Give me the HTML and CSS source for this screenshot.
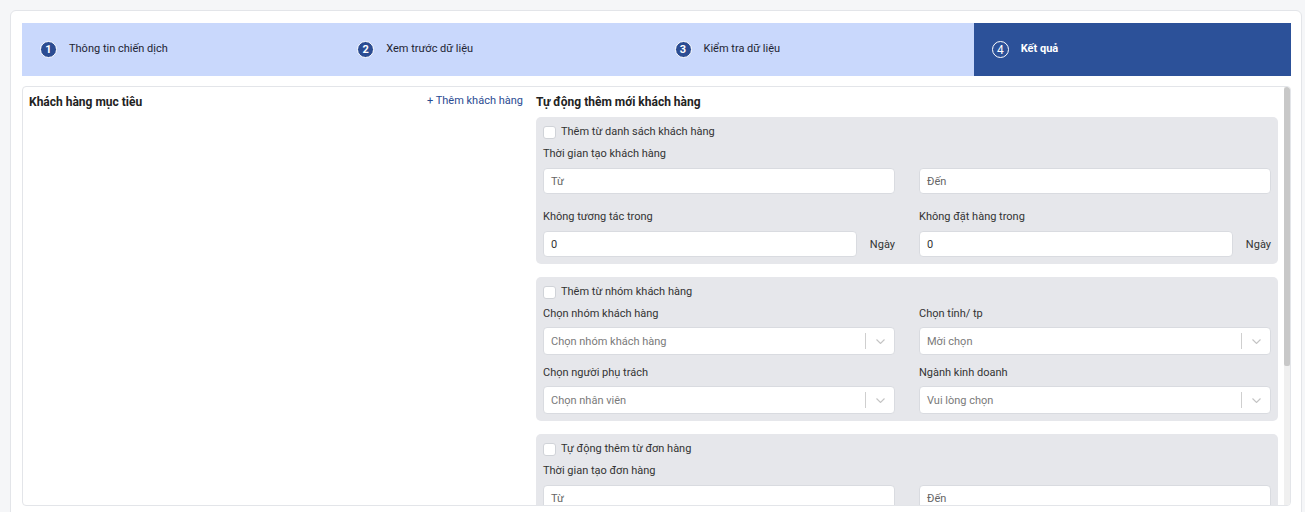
FILE: index.html
```html
<!DOCTYPE html>
<html lang="vi">
<head>
<meta charset="utf-8">
<title>Kết quả</title>
<link rel="stylesheet" href="styles.css">
</head>
<body>
<div class="page">
  <div class="card">
    <div class="stepper">
      <div class="step"><span class="num">1</span><span class="step-label">Thông tin chiến dịch</span></div>
      <div class="step"><span class="num">2</span><span class="step-label">Xem trước dữ liệu</span></div>
      <div class="step"><span class="num">3</span><span class="step-label">Kiểm tra dữ liệu</span></div>
      <div class="step active"><span class="num">4</span><span class="step-label">Kết quả</span></div>
    </div>
    <div class="panel">
      <div class="panel-body">
        <div class="col-left">
          <div class="head">
            <span class="title">Khách hàng mục tiêu</span>
            <span class="add">+ Thêm khách hàng</span>
          </div>
        </div>
        <div class="col-right">
          <div class="title title-right">Tự động thêm mới khách hàng</div>

          <div class="box box-a">
            <label class="check"><span class="cb"></span>Thêm từ danh sách khách hàng</label>
            <div class="grid">
              <div class="field">
                <div class="lbl">Thời gian tạo khách hàng</div>
                <div class="input placeholder">Từ</div>
              </div>
              <div class="field">
                <div class="lbl lbl-empty">&nbsp;</div>
                <div class="input placeholder">Đến</div>
              </div>
              <div class="field">
                <div class="lbl">Không tương tác trong</div>
                <div class="suffix-row"><div class="input">0</div><span class="suffix">Ngày</span></div>
              </div>
              <div class="field">
                <div class="lbl">Không đặt hàng trong</div>
                <div class="suffix-row"><div class="input">0</div><span class="suffix">Ngày</span></div>
              </div>
            </div>
          </div>

          <div class="box box-b">
            <label class="check"><span class="cb"></span>Thêm từ nhóm khách hàng</label>
            <div class="grid grid-b">
              <div class="field">
                <div class="lbl">Chọn nhóm khách hàng</div>
                <div class="select"><span class="ph">Chọn nhóm khách hàng</span><span class="sep"></span><svg class="chev" width="9" height="5" viewBox="0 0 9 5"><polyline points="0.5,0.5 4.5,4.5 8.5,0.5" fill="none" stroke="#c4c4c4" stroke-width="1.1"/></svg></div>
              </div>
              <div class="field">
                <div class="lbl">Chọn tỉnh/ tp</div>
                <div class="select"><span class="ph">Mời chọn</span><span class="sep"></span><svg class="chev" width="9" height="5" viewBox="0 0 9 5"><polyline points="0.5,0.5 4.5,4.5 8.5,0.5" fill="none" stroke="#c4c4c4" stroke-width="1.1"/></svg></div>
              </div>
              <div class="field">
                <div class="lbl">Chọn người phụ trách</div>
                <div class="select"><span class="ph">Chọn nhân viên</span><span class="sep"></span><svg class="chev" width="9" height="5" viewBox="0 0 9 5"><polyline points="0.5,0.5 4.5,4.5 8.5,0.5" fill="none" stroke="#c4c4c4" stroke-width="1.1"/></svg></div>
              </div>
              <div class="field">
                <div class="lbl">Ngành kinh doanh</div>
                <div class="select"><span class="ph">Vui lòng chọn</span><span class="sep"></span><svg class="chev" width="9" height="5" viewBox="0 0 9 5"><polyline points="0.5,0.5 4.5,4.5 8.5,0.5" fill="none" stroke="#c4c4c4" stroke-width="1.1"/></svg></div>
              </div>
            </div>
          </div>

          <div class="box box-c">
            <label class="check"><span class="cb"></span>Tự động thêm từ đơn hàng</label>
            <div class="grid">
              <div class="field">
                <div class="lbl">Thời gian tạo đơn hàng</div>
                <div class="input placeholder">Từ</div>
              </div>
              <div class="field">
                <div class="lbl lbl-empty">&nbsp;</div>
                <div class="input placeholder">Đến</div>
              </div>
            </div>
          </div>
        </div>
      </div>
      <div class="scrollbar"><div class="thumb"></div></div>
    </div>
  </div>
</div>
</body>
</html>
```
FILE: styles.css
```css
* { box-sizing: border-box; }
html, body { margin: 0; padding: 0; }
body {
  background: #f5f6f8;
  font-family: Roboto, "Noto Sans", "Liberation Sans", sans-serif;
  font-size: 11px;
  color: #333;
  height: 512px;
  overflow: hidden;
}
.page { padding: 10px 3px 0 10px; }
.card {
  background: #fff;
  border: 1px solid #e3e5e9;
  border-radius: 6px;
  padding: 12px 10px 20px 11px;
  height: 560px;
}
.stepper {
  display: grid;
  grid-template-columns: repeat(4, 1fr);
  height: 53px;
  background: #c9d8fc;
}
.step {
  display: flex;
  align-items: center;
  padding-left: 18px;
  color: #1d2433;
}
.step-label { margin-top: -2px; }
.num {
  width: 17px;
  height: 17px;
  border-radius: 50%;
  background: #2b4c92;
  border: 1px solid #fff;
  color: #fff;
  font-weight: 700;
  font-size: 11px;
  display: flex;
  align-items: center;
  justify-content: center;
  margin-right: 12px;
  flex: none;
}
.step.active { background: #2c5199; color: #fff; }
.step.active .num { background: transparent; border: 1.2px solid #fff; font-weight: 400; font-size: 12px; }
.step.active .step-label { font-weight: 700; }
.panel {
  margin-top: 10px;
  height: 420px;
  border: 1px solid #e3e5e9;
  border-radius: 4px;
  display: flex;
  overflow: hidden;
}
.panel-body {
  flex: 1;
  padding: 7px 6px 0 6px;
  display: grid;
  grid-template-columns: 494px 1fr;
  column-gap: 13px;
  align-items: start;
  overflow: hidden;
}
.scrollbar {
  width: 6px;
  flex: none;
  background: #f0f0f0;
}
.thumb {
  height: 279px;
  background: #c8c8c8;
  border-radius: 3px 3px 2px 2px;
}
.head {
  display: flex;
  justify-content: space-between;
  align-items: center;
}
.title {
  font-size: 12px;
  font-weight: 700;
  color: #222;
  line-height: 16px;
}
.add {
  color: #2b4c92;
  font-size: 11px;
  line-height: 16px;
  margin-top: -2px;
}
.title-right { margin-bottom: 7px; }
.box {
  background: #e6e7eb;
  border-radius: 5px;
  padding: 8px 7px 7px 7px;
  margin-bottom: 13px;
}
.check {
  display: flex;
  align-items: center;
  height: 14px;
  line-height: 14px;
  color: #333;
  margin-bottom: 7px;
}
.cb {
  width: 13px;
  height: 13px;
  background: #fff;
  border: 1px solid #d0d3d8;
  border-radius: 3px;
  margin-right: 5px;
  flex: none;
}
.grid {
  display: grid;
  grid-template-columns: 1fr 1fr;
  column-gap: 24px;
  row-gap: 15px;
}
.grid-b { row-gap: 10px; }
.lbl {
  line-height: 15px;
  margin-bottom: 7px;
  color: #333;
}
.grid-b .lbl { margin-bottom: 6px; }
.input {
  height: 26px;
  background: #fff;
  border: 1px solid #d9dbe0;
  border-radius: 4px;
  padding: 0 7px;
  display: flex;
  align-items: center;
  color: #333;
}
.input.placeholder { color: #666; }
.suffix-row {
  display: flex;
  align-items: center;
}
.suffix-row .input { flex: 1; }
.suffix {
  margin-left: 13px;
  color: #333;
}
.select {
  height: 28px;
  background: #fff;
  border: 1px solid #d9dbe0;
  border-radius: 4px;
  padding: 0 0 0 7px;
  display: flex;
  align-items: center;
}
.ph { flex: 1; color: #7a7a7a; }
.sep {
  width: 1px;
  height: 16px;
  background: #cfcfcf;
}
.chev { margin: 0 9px 0 10px; }
```
